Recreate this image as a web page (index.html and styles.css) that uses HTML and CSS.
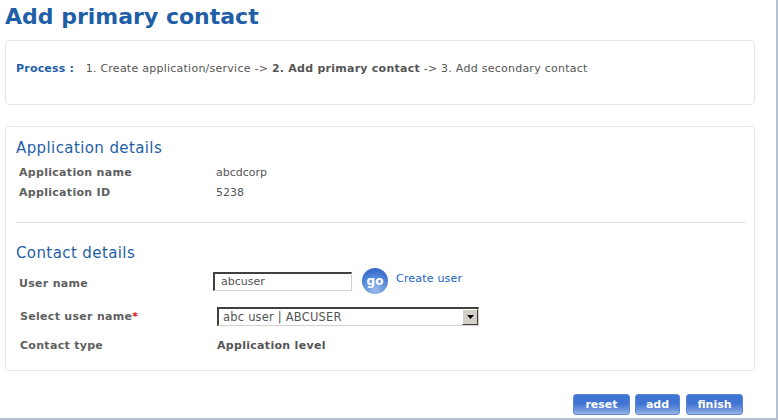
FILE: index.html
```html
<!DOCTYPE html>
<html>
<head>
<meta charset="utf-8">
<link rel="stylesheet" href="styles.css">
</head>
<body>
<div class="page">
  <h1 class="title">Add primary contact</h1>
  <div class="card process">
    <span class="process-label">Process :</span>
    <span class="steps">1. Create application/service -&gt; <b>2. Add primary contact</b> -&gt; 3. Add secondary contact</span>
  </div>
  <div class="card details">
    <h2 class="section">Application details</h2>
    <div class="info-grid">
      <div class="label">Application name</div><div class="value">abcdcorp</div>
      <div class="label">Application ID</div><div class="value">5238</div>
    </div>
    <div class="sep"></div>
    <h2 class="section">Contact details</h2>
    <div class="form">
      <div class="form-row row-user">
        <div class="label">User name</div>
        <div class="field">
          <div class="input">abcuser</div>
          <div class="go">go</div>
          <span class="link">Create user</span>
        </div>
      </div>
      <div class="form-row row-select">
        <div class="label">Select user name<span class="req">*</span></div>
        <div class="field">
          <div class="select"><span class="select-text">abc user | ABCUSER</span><span class="select-btn"><svg width="7" height="4" viewBox="0 0 7 4"><path d="M0 0h7L3.5 4z" fill="#000"/></svg></span></div>
        </div>
      </div>
      <div class="form-row row-type">
        <div class="label">Contact type</div>
        <div class="field"><b class="type">Application level</b></div>
      </div>
    </div>
  </div>
  <div class="actions">
    <div class="btn w-reset">reset</div>
    <div class="btn w-add">add</div>
    <div class="btn w-finish">finish</div>
  </div>
</div>
</body>
</html>
```
FILE: styles.css
```css
html, body { margin: 0; padding: 0; background: #fff; }
body { font-family: "DejaVu Sans", Verdana, sans-serif; font-size: 11px; color: #555; }
.page {
  width: 778px; height: 420px; box-sizing: border-box;
  border-right: 2px solid #b5c2d1; border-bottom: 2px solid #b5c2d1;
  padding: 0 0 0 5px;
  display: flex; flex-direction: column;
}
.title {
  margin: 0; padding-top: 3px; height: 37px;
  font-size: 22px; font-weight: bold; color: #1f5fa8; line-height: 27px;
}
.card {
  width: 750px; box-sizing: border-box;
  border: 1px solid #e6e6e6; border-radius: 4px; background: #fff;
}
.process { height: 65px; padding: 21px 0 0 10px; line-height: 14px; }
.process-label { color: #1f5fa8; font-weight: bold; margin-right: 8px; letter-spacing: 0.2px; }
.steps { letter-spacing: 0.25px; }
.steps b { color: #555; }
.details { margin-top: 21px; height: 245px; padding: 12px 9px 0 10px; }
.section { margin: 0; font-size: 15px; font-weight: normal; color: #1f5fa8; line-height: 18px; letter-spacing: 0.4px; }
.info-grid {
  display: grid; grid-template-columns: 197px 1fr; row-gap: 6px;
  padding: 9px 0 0 3px; line-height: 14px;
}
.label { font-weight: bold; color: #606060; letter-spacing: 0.3px; }
.value { color: #555; }
.sep { border-top: 1px solid #dcdcdc; margin: 22px 0 21px 0; }
.form { padding-top: 6px; }
.form-row { display: grid; grid-template-columns: 194px 1fr; align-items: center; }
.row-user { height: 26px; padding-left: 3px; }
.row-user .label { padding-top: 4px; }
.field { display: flex; align-items: center; }
.input {
  width: 139px; height: 19px; box-sizing: border-box;
  border: 1px solid #d4d0c8; border-top: 2px solid #404040; border-left: 2px solid #404040;
  padding: 1px 0 0 6px; line-height: 14px; font-size: 11px; color: #555;
}
.go {
  width: 26px; height: 26px; border-radius: 50%; margin-left: 10px;
  background: radial-gradient(circle at 50% 85%, #9cbcec 0%, #5d8fdc 45%, #3a6fcf 75%, #3467c9 100%);
  color: #fff; font-weight: bold; font-size: 12px; line-height: 26px; text-align: center;
}
.link { color: #1a63c5; margin-left: 8px; align-self: flex-start; line-height: 14px; margin-top: 4px; letter-spacing: 0.2px; }
.row-select { margin-top: 12px; height: 20px; padding-left: 4px; }
.row-select .field { padding-left: 3px; }
.req { color: #e01010; }
.select {
  width: 262px; height: 19px; box-sizing: border-box; display: flex;
  border: 1px solid #d4d0c8; border-top: 2px solid #404040; border-left: 2px solid #404040;
  background: #fff;
}
.select-text { flex: 1; padding-left: 4px; line-height: 16px; font-size: 11.5px; color: #555; letter-spacing: 0.2px; }
.select-btn {
  width: 16px; height: 16px; box-sizing: border-box; background: #d4d0c8;
  border: 1px solid; border-color: #fff #404040 #404040 #fff;
  display: flex; align-items: center; justify-content: center;
}
.row-type { margin-top: 13px; padding-left: 4px; line-height: 14px; }
.row-type .field { padding-left: 3px; }
.type { color: #555; letter-spacing: 0.3px; }
.actions { display: flex; gap: 5px; margin-top: 23px; padding-left: 568px; }
.btn {
  height: 21px; box-sizing: border-box; border-radius: 3px;
  background: linear-gradient(to bottom, #3d73d3 0%, #3f74d2 45%, #6f97dc 80%, #9db8e6 100%);
  color: #fff; font-weight: bold; font-size: 11px; line-height: 20px; text-align: center;
  border: 1px solid #5a86d4;
}
.w-reset { width: 57px; }
.w-add { width: 45px; }
.w-finish { width: 57px; margin-left: 1px; }
```
